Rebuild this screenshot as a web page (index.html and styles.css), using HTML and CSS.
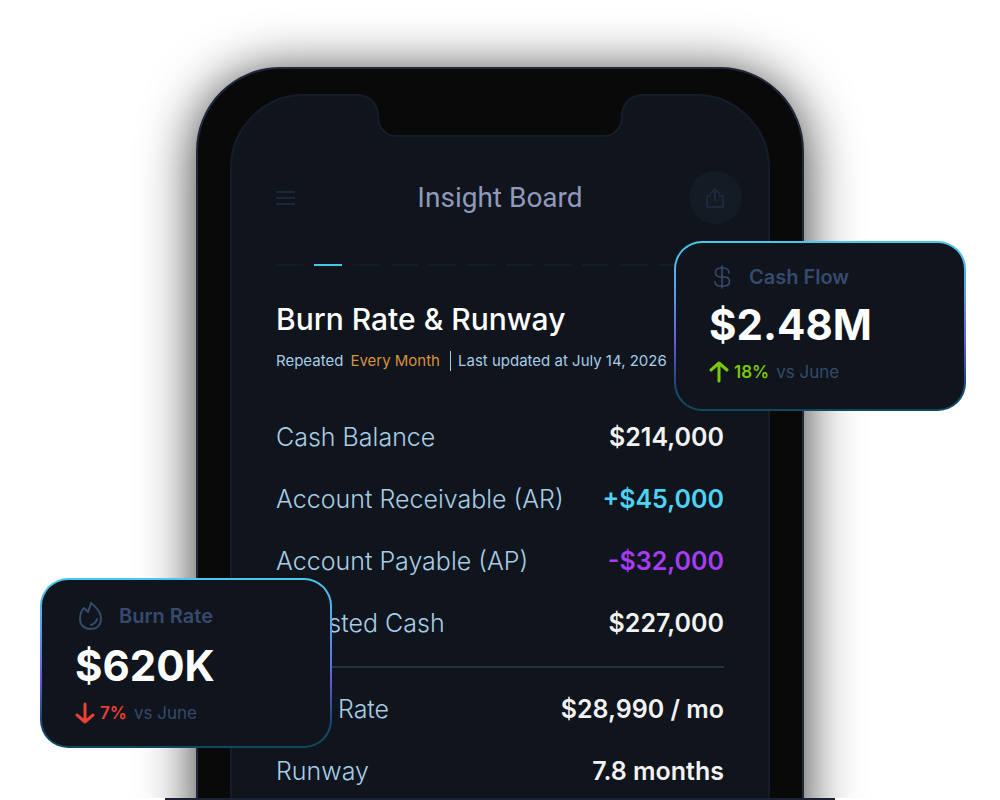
FILE: index.html
```html
<!DOCTYPE html>
<html lang="en">

<head>
    <meta charset="UTF-8">
    <meta name="viewport" content="width=device-width, initial-scale=1">
    <title>Insight Board</title>
    <link rel="stylesheet" href="styles.css">
</head>

<body>
    <main class="stage">
        <div class="scene">
            <div class="device">
                <div class="phone">
                    <div class="screen">
                        <!-- Notch, drawn over the top border of the screen -->
                        <svg class="notch" width="284" height="46" viewBox="0 0 284 46" aria-hidden="true">
                            <path class="notch-fill" d="M0 0H284V2H0Z" />
                            <path class="notch-line" d="M-2 2C12 2 20 11 20 23C20 35 28 43 38 43H246C256 43 264 35 264 23C264 11 272 2 286 2" />
                        </svg>

                        <header class="topbar">
                            <button class="menu-btn" type="button" aria-label="Menu">
                                <svg width="20" height="16" viewBox="0 0 20 16">
                                    <path d="M0 2H19M0 8H19M0 14H19" stroke="currentColor" stroke-width="2" />
                                </svg>
                            </button>
                            <h1>Insight Board</h1>
                            <button class="share-btn" type="button" aria-label="Share">
                                <svg width="20" height="22" viewBox="0 0 20 22" fill="none" stroke="currentColor" stroke-width="2" stroke-linejoin="round">
                                    <path d="M6 9H2V20H18V9H14M10 14V2M5 7L10 2L15 7" />
                                </svg>
                            </button>
                        </header>

                        <div class="content">
                            <div class="pager">
                                <span></span><span class="active"></span><span></span><span></span>
                                <span></span><span></span><span></span><span></span>
                                <span></span><span></span><span></span><span></span>
                            </div>

                            <h2>Burn Rate &amp; Runway</h2>
                            <p class="meta">
                                <span>Repeated</span>
                                <span class="period">Every Month</span>
                                <span class="updated">Last updated at July 14, 2026</span>
                            </p>

                            <dl class="figures">
                                <div class="row"><dt>Cash Balance</dt><dd>$214,000</dd></div>
                                <div class="row"><dt>Account Receivable (AR)</dt><dd class="plus">+$45,000</dd></div>
                                <div class="row"><dt>Account Payable (AP)</dt><dd class="minus">-$32,000</dd></div>
                                <div class="row"><dt>Adjusted Cash</dt><dd>$227,000</dd></div>
                            </dl>
                            <dl class="figures totals">
                                <div class="row"><dt>Burn Rate</dt><dd>$28,990 / mo</dd></div>
                                <div class="row"><dt>Runway</dt><dd>7.8 months</dd></div>
                            </dl>
                        </div>
                    </div>
                </div>

                <!-- Floating cards -->
                <section class="card card-cash">
                    <h3>
                        <svg width="26" height="30" viewBox="0 0 26 30" fill="none" stroke="currentColor" stroke-width="1.600" stroke-linecap="round">
                            <path d="M13 4V26M20 11C20 8 17.500 6 14.500 6H11.500C8.500 6 6.500 8 6.500 10.500C6.500 13 8.500 15 11.500 15H15C18 15 20.500 16.500 20.500 19.500C20.500 22.500 18 24 15 24H11C8 24 6 22 6 19.500" />
                        </svg>
                        Cash Flow
                    </h3>
                    <p class="amount">$2.48M</p>
                    <p class="change up">
                        <svg width="20" height="22" viewBox="0 0 20 22" fill="none" stroke="currentColor" stroke-width="3" stroke-linecap="round" stroke-linejoin="round">
                            <path d="M10 20V2M2 9L10 2L18 9" />
                        </svg>
                        <strong>18%</strong> <span>vs June</span>
                    </p>
                </section>

                <section class="card card-burn">
                    <h3>
                        <svg width="30" height="30" viewBox="0 0 30 30" fill="none" stroke="currentColor" stroke-width="2" stroke-linecap="round" stroke-linejoin="round">
                            <path d="M16 2C15 6 14 8 13 11C12 10 11 9 9 7C6 10 5 14 5 18C5 24 9 28 15.500 28C22 28 26 24 26 17C26 11 21 6 16 2Z" />
                            <path d="M22 18C21 22 19 23 16 24" />
                        </svg>
                        Burn Rate
                    </h3>
                    <p class="amount">$620K</p>
                    <p class="change down">
                        <svg width="20" height="22" viewBox="0 0 20 22" fill="none" stroke="currentColor" stroke-width="3" stroke-linecap="round" stroke-linejoin="round">
                            <path d="M10 2V20M2 13L10 20L18 13" />
                        </svg>
                        <strong>7%</strong> <span>vs June</span>
                    </p>
                </section>
            </div>
        </div>
        <div class="base-line"></div>
    </main>
</body>

</html>
```
FILE: styles.css
```css
* {
    box-sizing: border-box;
}

body {
    margin: 0;
    background: #fff;
    font-family: Inter, "Liberation Sans", sans-serif;
}

h1, h2, h3, p, dl, dd {
    margin: 0;
}

button {
    border: none;
    background: none;
    cursor: pointer;
}

svg {
    display: block;
    flex: none;
}

/* The scene is cut off by the base line */
.stage {
    display: flex;
    flex-direction: column;
    height: 100vh;
}

.scene {
    flex: 1;
    min-height: 0;
    overflow: hidden;
    padding: 67px 20px 0;
}

.base-line {
    width: 67%;
    height: 2px;
    margin: 0 auto;
    background: #1b2236;
}

/* Phone */
.device {
    position: relative;
    max-width: 608px;
    margin: 0 auto;
}

.phone {
    padding: 25px 32px 32px;
    background: #090909;
    border: 2px solid #20283d;
    border-radius: 84px;
    box-shadow: 0 6px 54px rgba(0, 0, 0, 0.8);
}

.screen {
    position: relative;
    padding: 75px 0 60px;
    background: #10141c;
    border: 2px solid #161d2a;
    border-radius: 74px;
}

.notch {
    position: absolute;
    top: -3px;
    left: 50%;
    margin-left: -142px;
}

.notch-fill {
    fill: #090909;
}

.notch-line {
    fill: #090909;
    stroke: #161d2a;
    stroke-width: 2;
}

/* Top bar */
.topbar {
    display: flex;
    align-items: center;
    justify-content: space-between;
    padding: 0 26px;
}

.topbar h1 {
    font-family: Roboto, sans-serif;
    font-size: 28px;
    font-weight: 400;
    color: #8f99bb;
}

.menu-btn {
    width: 53px;
    padding: 0 0 0 18px;
    color: #1e2739;
}

.share-btn {
    display: flex;
    align-items: center;
    justify-content: center;
    width: 53px;
    height: 53px;
    padding: 0;
    border-radius: 50%;
    background: #151b24;
    color: #1e273b;
}

.content {
    padding: 40px 44px 0;
}

.pager {
    display: flex;
    gap: 11px;
}

.pager span {
    flex: 1;
    height: 2px;
    background: #151b27;
}

.pager .active {
    background: #4cc3e8;
}

h2 {
    margin-top: 33px;
    font-size: 30px;
    line-height: 40px;
    font-weight: 500;
    color: #fff;
}

.meta {
    display: flex;
    align-items: center;
    gap: 7px;
    margin-top: 12px;
    font-size: 15px;
    line-height: 20px;
    white-space: nowrap;
    color: #a6cde6;
}

.period {
    color: #d8913c;
}

.updated {
    margin-left: 3px;
    padding-left: 7px;
    border-left: 1px solid #a6cde6;
}

/* Figures */
.figures {
    margin-top: 35px;
    font-size: 25px;
}

.row {
    display: flex;
    align-items: center;
    justify-content: space-between;
    height: 62px;
    white-space: nowrap;
}

.row dt {
    font-weight: 300;
    color: #a6cde6;
}

.row dd {
    font-weight: 600;
    color: #f2f2f2;
}

.row .plus {
    color: #4cd3f5;
}

.row .minus {
    color: #a63df5;
}

.totals {
    margin-top: 12px;
    padding-top: 10px;
    border-top: 2px solid #29313c;
}

/* Floating cards */
.card {
    position: absolute;
    width: 292px;
    padding: 18px 33px 24px;
    border: 2px solid transparent;
    border-radius: 28px;
    background:
        linear-gradient(#10141c, #10141c) padding-box,
        linear-gradient(#48c9ea, #5a9cf0 30%, #6459e0 60%, #1f4a80 82%, #0c4a5c) border-box;
}

.card-cash {
    top: 174px;
    right: -162px;
}

.card-burn {
    top: 511px;
    left: -156px;
    padding-bottom: 20px;
}

.card h3 {
    display: flex;
    align-items: center;
    gap: 14px;
    font-size: 20px;
    line-height: 32px;
    font-weight: 600;
    color: #374a6d;
}

.card-burn h3 {
    line-height: 36px;
}

.amount {
    margin-top: 4px;
    font-size: 42px;
    line-height: 56px;
    font-weight: 700;
    color: #fff;
}

.change {
    display: flex;
    align-items: center;
    gap: 5px;
    margin-top: 6px;
    font-size: 17px;
    line-height: 26px;
    color: #374a6d;
}

.change strong {
    margin-right: 2px;
    font-weight: 600;
}

.up svg,
.up strong {
    color: #7bc808;
}

.down svg,
.down strong {
    color: #ee4035;
}
```
